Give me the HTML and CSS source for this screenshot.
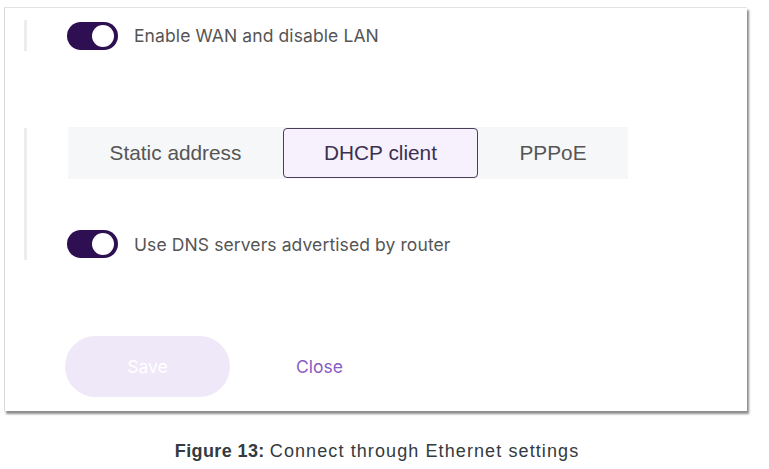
FILE: index.html
```html
<!DOCTYPE html>
<html>
<head>
<meta charset="utf-8">
<link rel="stylesheet" href="styles.css">
</head>
<body>
<div class="card">
  <div class="group group-top">
    <div class="toggle-row">
      <span class="toggle"><span class="knob"></span></span>
      <span class="toggle-label">Enable WAN and disable LAN</span>
    </div>
  </div>
  <div class="group group-mid">
    <div class="segment">
      <div class="seg">Static address</div>
      <div class="seg seg-active">DHCP client</div>
      <div class="seg seg-last">PPPoE</div>
    </div>
    <div class="toggle-row toggle-row-dns">
      <span class="toggle"><span class="knob"></span></span>
      <span class="toggle-label">Use DNS servers advertised by router</span>
    </div>
  </div>
  <div class="footer">
    <div class="btn-save">Save</div>
    <div class="btn-close">Close</div>
  </div>
</div>
<div class="caption"><b>Figure 13:</b> <span class="cap-text">Connect through Ethernet settings</span></div>
</body>
</html>
```
FILE: styles.css
```css
html, body {
  margin: 0;
  padding: 0;
  background: #ffffff;
}
body {
  width: 769px;
  height: 469px;
  overflow: hidden;
  font-family: Inter, "Liberation Sans", sans-serif;
}
.card {
  box-sizing: border-box;
  margin: 7px 0 0 4px;
  width: 743px;
  height: 404px;
  background: #fff;
  border-top: 1px solid #e2e2e2;
  border-left: 1px solid #d8d8d8;
  box-shadow: 2px 3px 2px rgba(0,0,0,0.45);
  padding-left: 19px;
  display: flex;
  flex-direction: column;
}
.group {
  border-left: 3px solid #ededed;
  padding-left: 40px;
}
.group-top {
  margin-top: 12px;
  height: 31px;
  display: flex;
  align-items: center;
}
.group-mid {
  margin-top: 77px;
  height: 132px;
  padding-left: 41px;
}
.toggle-row {
  display: flex;
  align-items: center;
  gap: 16px;
}
.toggle {
  width: 51px;
  height: 28px;
  border-radius: 14px;
  background: #2d0f52;
  position: relative;
  flex: none;
}
.knob {
  position: absolute;
  right: 4px;
  top: 3px;
  width: 22px;
  height: 22px;
  border-radius: 50%;
  background: #fff;
}
.toggle-label {
  font-size: 17.5px;
  color: #555;
  letter-spacing: 0.1px;
}
.segment {
  display: flex;
  width: 560px;
  height: 52px;
  margin-top: -1px;
  background: #f6f7f9;
}
.seg {
  font-family: "Liberation Sans", Arial, sans-serif;
  font-size: 20.8px;
  color: #555555;
  display: flex;
  align-items: center;
  justify-content: center;
  width: 215px;
  box-sizing: border-box;
}
.seg-active {
  width: 195px;
  margin: 1px 0;
  border: 1px solid #4a3d5a;
  border-radius: 4px;
  background: #f7f0fd;
  color: #3a3050;
}
.seg-last {
  width: 150px;
}
.toggle-row-dns {
  margin-top: 51px;
  margin-left: -1px;
}
.footer {
  margin-top: 76px;
  display: flex;
  align-items: center;
  padding-left: 41px;
}
.btn-save {
  width: 165px;
  height: 61px;
  border-radius: 31px;
  background: #efe8f8;
  color: #fff;
  font-size: 17.5px;
  display: flex;
  align-items: center;
  justify-content: center;
}
.btn-close {
  margin-left: 66px;
  font-size: 17.5px;
  color: #8a5cc4;
}
.caption {
  margin-top: 30px;
  text-align: center;
  font-family: "Liberation Sans", Arial, sans-serif;
  font-size: 18px;
  color: #333a40;
  padding-right: 15px;
}
.caption b {
  font-weight: bold;
  letter-spacing: 0.4px;
}
.cap-text {
  letter-spacing: 1.1px;
}
```
